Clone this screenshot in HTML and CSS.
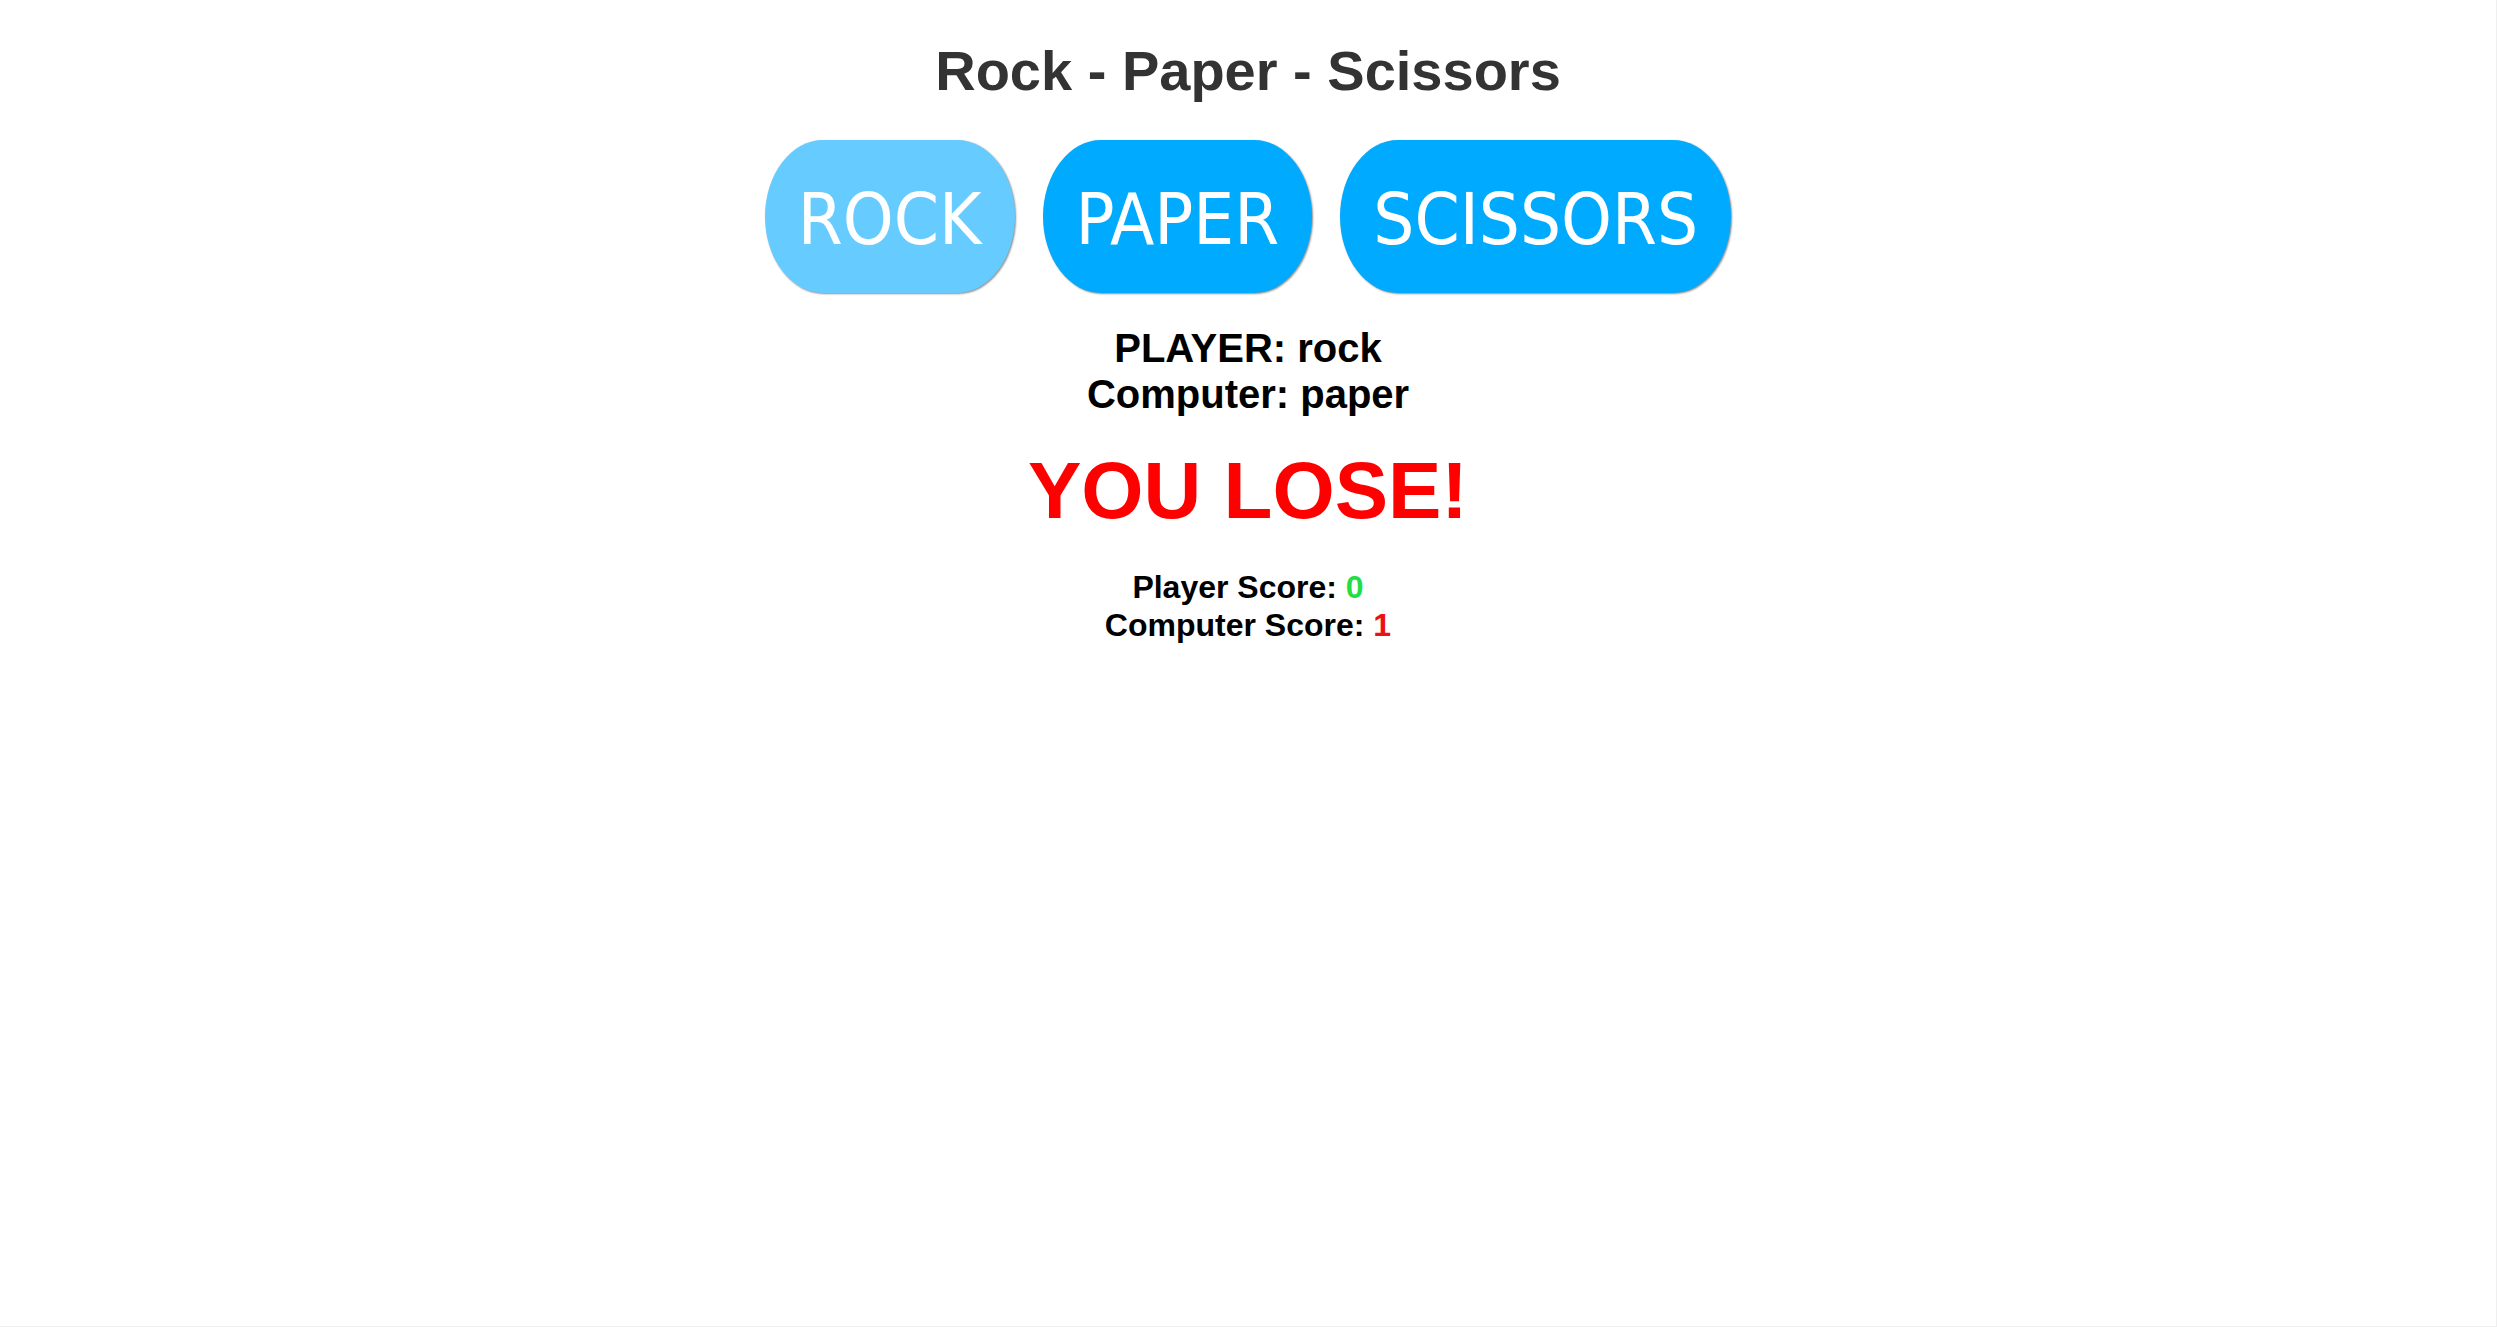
FILE: index.html
```html
<!DOCTYPE html>
<html lang="en">
<head>
<meta charset="utf-8">
<title>Rock - Paper - Scissors</title>
<link rel="stylesheet" href="styles.css">
</head>
<body>
<main class="game">
  <h1 class="title">Rock - Paper - Scissors</h1>
  <div class="choices">
    <button class="choice choice-active" type="button">ROCK</button>
    <button class="choice" type="button">PAPER</button>
    <button class="choice" type="button">SCISSORS</button>
  </div>
  <div class="picks">
    <div>PLAYER: rock</div>
    <div>Computer: paper</div>
  </div>
  <div class="result">YOU LOSE!</div>
  <div class="scores">
    <div>Player Score: <span class="score-win">0</span></div>
    <div>Computer Score: <span class="score-lose">1</span></div>
  </div>
</main>
</body>
</html>
```
FILE: styles.css
```css
html {
  height: 100%;
}

body {
  margin: 0;
  min-height: 100%;
  box-sizing: border-box;
  background: #ffffff;
  border-right: 1px solid #efefef;
  border-bottom: 1px solid #efefef;
  font-family: "Liberation Sans", Arial, sans-serif;
  color: #000000;
}

.game {
  display: flex;
  flex-direction: column;
  align-items: center;
  text-align: center;
  padding-top: 38px;
}

.title {
  margin: 0;
  font-size: 56px;
  line-height: 65px;
  font-weight: bold;
  color: #333333;
}

.choices {
  display: flex;
  gap: 28px;
  margin-top: 37px;
}

.choice {
  display: flex;
  align-items: center;
  justify-content: center;
  height: 153px;
  padding: 5px 33px 0;
  border: none;
  border-radius: 58px / 50%;
  background: #00aaff;
  color: #ffffff;
  font-family: "DejaVu Sans Condensed", "Noto Sans", sans-serif;
  font-size: 72px;
  line-height: 1;
  box-shadow: 1px 1px 2px rgba(0, 0, 0, 0.45);
  cursor: pointer;
}

.choice-active {
  background: #66ccff;
}

.picks {
  margin-top: 32px;
  font-size: 40px;
  line-height: 46px;
  font-weight: bold;
}

.result {
  margin-top: 28px;
  font-size: 80px;
  line-height: 92px;
  font-weight: bold;
  color: #ff0000;
}

.scores {
  margin-top: 31px;
  font-size: 32px;
  line-height: 38px;
  font-weight: bold;
}

.score-win {
  color: #22dd44;
}

.score-lose {
  color: #ee1111;
}
```
